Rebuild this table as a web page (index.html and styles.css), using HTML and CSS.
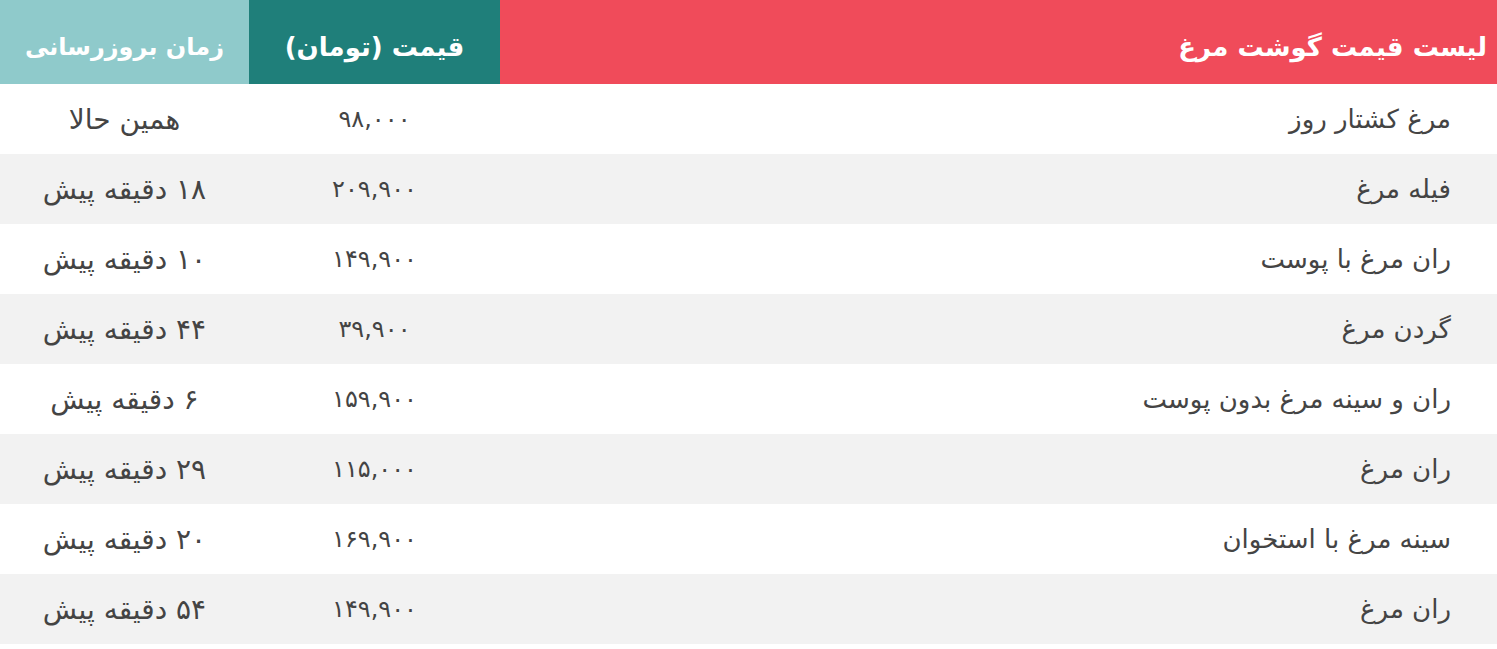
FILE: index.html
```html
<!DOCTYPE html>
<html lang="fa" dir="rtl">
<head>
<meta charset="utf-8">
<link rel="stylesheet" href="styles.css">
<title>لیست قیمت گوشت مرغ</title>
</head>
<body>
<table class="prices">
  <colgroup>
    <col class="col-name">
    <col class="col-price">
    <col class="col-time">
  </colgroup>
  <thead>
    <tr>
      <th class="h-name">لیست قیمت گوشت مرغ</th>
      <th class="h-price">قیمت (تومان)</th>
      <th class="h-time">زمان بروزرسانی</th>
    </tr>
  </thead>
  <tbody>
    <tr><td class="name">مرغ کشتار روز</td><td class="num price">۹۸,۰۰۰</td><td class="num time">همین حالا</td></tr>
    <tr><td class="name">فیله مرغ</td><td class="num price">۲۰۹,۹۰۰</td><td class="num time">۱۸ دقیقه پیش</td></tr>
    <tr><td class="name">ران مرغ با پوست</td><td class="num price">۱۴۹,۹۰۰</td><td class="num time">۱۰ دقیقه پیش</td></tr>
    <tr><td class="name">گردن مرغ</td><td class="num price">۳۹,۹۰۰</td><td class="num time">۴۴ دقیقه پیش</td></tr>
    <tr><td class="name">ران و سینه مرغ بدون پوست</td><td class="num price">۱۵۹,۹۰۰</td><td class="num time">۶ دقیقه پیش</td></tr>
    <tr><td class="name">ران مرغ</td><td class="num price">۱۱۵,۰۰۰</td><td class="num time">۲۹ دقیقه پیش</td></tr>
    <tr><td class="name">سینه مرغ با استخوان</td><td class="num price">۱۶۹,۹۰۰</td><td class="num time">۲۰ دقیقه پیش</td></tr>
    <tr><td class="name">ران مرغ</td><td class="num price">۱۴۹,۹۰۰</td><td class="num time">۵۴ دقیقه پیش</td></tr>
  </tbody>
</table>
</body>
</html>
```
FILE: styles.css
```css
html, body {
  margin: 0;
  padding: 0;
  background: #ffffff;
}
body {
  font-family: "DejaVu Sans", "Noto Sans", sans-serif;
  color: #444444;
}
.prices {
  width: 100%;
  border-collapse: collapse;
  table-layout: fixed;
  direction: rtl;
}
.col-price { width: 251px; }
.col-time { width: 249px; }
.prices th {
  height: 74px;
  padding: 10px 8px 0;
  font-size: 26px;
  font-weight: bold;
  color: #ffffff;
  text-align: center;
  white-space: nowrap;
}
.prices th.h-name {
  background: #f04b5a;
  text-align: right;
  padding-right: 10px;
}
.prices th.h-price { background: #1f7f7a; }
.prices th.h-time {
  background: #8fcacb;
  font-size: 24px;
}
.prices td {
  height: 70px;
  padding: 0;
  font-size: 26px;
  color: #444444;
  white-space: nowrap;
}
.prices tbody tr:nth-child(even) td { background: #f2f2f2; }
.prices td.name {
  text-align: right;
  padding-right: 46px;
}
.prices td.num { text-align: center; }
.prices td.price { font-size: 24px; }
.prices td.time { font-size: 28px; }
```
